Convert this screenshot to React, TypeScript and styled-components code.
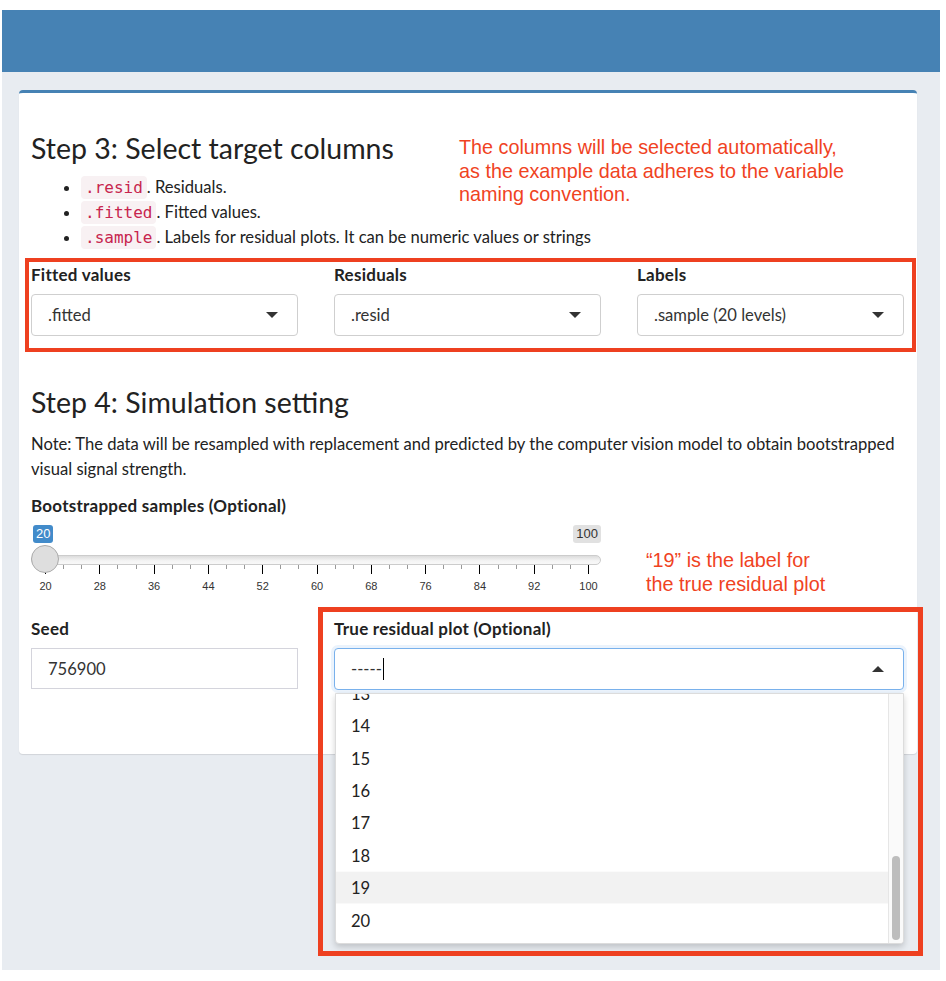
import React from 'react';
import styled, { createGlobalStyle } from 'styled-components';

const GlobalStyle = createGlobalStyle`
  html, body { margin: 0; padding: 0; background: #ffffff; }
  body { font-family: "Lato", "Noto Sans", sans-serif; color: #333; }
  * { box-sizing: border-box; }
`;

const Frame = styled.div`
  position: relative;
  margin: 10px 0 0 2px;
  width: 938px;
  height: 960px;
  background: #e8ecf1;
`;

const TopBar = styled.header`
  height: 62px;
  background: #4682b4;
`;

const Content = styled.main`
  padding: 18px 23px 0 17px;
`;

const Card = styled.section`
  background: #fff;
  border-top: 3px solid #4682b4;
  border-radius: 4px;
  box-shadow: 0 1px 1px rgba(0, 0, 0, 0.1);
  padding: 38px 13px 64px 12px;
`;

const Heading = styled.h3<{ $top?: number }>`
  margin: ${(p) => p.$top || 0}px 0 0;
  font-size: 28.5px;
  font-weight: 400;
  line-height: 34px;
  color: #222;
`;

const BulletList = styled.ul`
  margin: 10px 0 0;
  padding-left: 50px;
  font-size: 16.6px;
  line-height: 25px;
  color: #222;
`;

const Code = styled.code`
  font-family: "DejaVu Sans Mono", monospace;
  font-size: 16px;
  color: #c7254e;
  background: #f8f1f3;
  padding: 2px 4px;
  border-radius: 4px;
`;

const FieldGrid = styled.div<{ $top: number }>`
  display: grid;
  grid-template-columns: repeat(3, 267px);
  column-gap: 36px;
  margin-top: ${(p) => p.$top}px;
`;

const Field = styled.div<{ $span?: number }>`
  grid-column: span ${(p) => p.$span || 1};
  position: relative;
`;

const Label = styled.label`
  display: block;
  font-weight: 700;
  font-size: 17px;
  letter-spacing: 0.25px;
  line-height: 20px;
  margin-bottom: 9px;
  color: #222;
`;

const SelectBox = styled.div<{ $focus?: boolean }>`
  height: 42px;
  display: flex;
  align-items: center;
  justify-content: space-between;
  padding: 0 19px 0 16px;
  border: 1px solid ${(p) => (p.$focus ? '#79b1ec' : '#cfcfcf')};
  border-radius: 4px;
  font-size: 16.6px;
  color: #333;
  background: #fff;
  box-shadow: ${(p) => (p.$focus ? '0 0 0 3px rgba(121,177,236,0.15)' : 'none')};
`;

const Caret = styled.span<{ $up?: boolean }>`
  width: 0;
  height: 0;
  border-left: 6px solid transparent;
  border-right: 6px solid transparent;
  ${(p) => (p.$up ? 'border-bottom: 6px solid #333;' : 'border-top: 6px solid #333;')}
`;

const TextInput = styled.div`
  height: 41px;
  margin-top: 1px;
  display: flex;
  align-items: center;
  padding: 0 16px;
  border: 1px solid #d4d4dc;
  font-size: 16.6px;
  color: #333;
  background: #fff;
`;

const Typed = styled.span`
  display: flex;
  align-items: center;
`;

const Cursor = styled.span`
  display: inline-block;
  width: 1px;
  height: 22px;
  background: #000;
  margin-left: 1px;
`;

const Note = styled.p`
  margin: 13px 0 0;
  font-size: 16.6px;
  line-height: 25px;
  color: #222;
`;

const SliderBlock = styled.div`
  margin-top: 14px;
  width: 570px;
`;

const SliderArea = styled.div`
  position: relative;
  height: 78px;
  margin-top: 9px;
  font-family: "Liberation Sans", Arial, sans-serif;
`;

const ValueTag = styled.span<{ $active?: boolean }>`
  position: absolute;
  top: 0;
  ${(p) => (p.$active ? 'left: 2px;' : 'right: 0;')}
  font-size: 13px;
  line-height: 18px;
  padding: 0 3px;
  border-radius: 3px;
  background: ${(p) => (p.$active ? '#428bca' : '#e1e1e1')};
  color: ${(p) => (p.$active ? '#fff' : '#333')};
`;

const Track = styled.div`
  position: absolute;
  left: 0;
  right: 0;
  top: 30px;
  height: 10px;
  border: 1px solid #cccccc;
  border-radius: 6px;
  background: linear-gradient(to bottom, #dcdcdc 0%, #f4f4f4 60%, #f8f8f8 100%);
`;

const Handle = styled.div`
  position: absolute;
  left: 0;
  top: 20px;
  width: 28px;
  height: 28px;
  border-radius: 50%;
  background: #dedede;
  border: 1px solid #ababab;
`;

const Tick = styled.span<{ $major?: boolean }>`
  position: absolute;
  top: 40px;
  width: 1px;
  height: ${(p) => (p.$major ? 9 : 4)}px;
  background: ${(p) => (p.$major ? '#000' : '#999')};
`;

const TickLabel = styled.span`
  position: absolute;
  top: 54px;
  font-size: 11px;
  line-height: 14px;
  color: #333;
  transform: translateX(-50%);
`;

const Menu = styled.div`
  position: absolute;
  left: 1px;
  right: 0;
  top: 74px;
  height: 251px;
  background: #fff;
  border: 1px solid #dcdcdc;
  border-radius: 0 0 4px 4px;
  box-shadow: 0 3px 6px rgba(0, 0, 0, 0.18);
  overflow: hidden;
  z-index: 5;
`;

const MenuInner = styled.div<{ $offset: number }>`
  transform: translateY(${(p) => -p.$offset}px);
`;

const MenuItem = styled.div<{ $hover?: boolean }>`
  height: 32.4px;
  display: flex;
  align-items: center;
  padding-left: 15px;
  font-size: 16.6px;
  color: #222;
  background: ${(p) => (p.$hover ? '#f2f2f2' : '#fff')};
`;

const ScrollTrack = styled.div`
  position: absolute;
  top: 0;
  right: 0;
  bottom: 0;
  width: 15px;
  background: #fafafa;
  border-left: 1px solid #e6e6e6;
`;

const ScrollThumb = styled.div`
  position: absolute;
  left: 3px;
  width: 8px;
  top: 162px;
  height: 84px;
  border-radius: 4px;
  background: #bdbdbd;
`;

const Annotation = styled.div<{ $left: number; $top: number; $lh: number }>`
  position: absolute;
  left: ${(p) => p.$left}px;
  top: ${(p) => p.$top}px;
  font-family: "Liberation Sans", Arial, sans-serif;
  font-size: 19.8px;
  line-height: ${(p) => p.$lh}px;
  color: #f0431f;
  white-space: nowrap;
`;

const RedBox = styled.div<{ $l: number; $t: number; $w: number; $h: number; $b: number }>`
  position: absolute;
  left: ${(p) => p.$l}px;
  top: ${(p) => p.$t}px;
  width: ${(p) => p.$w}px;
  height: ${(p) => p.$h}px;
  border: ${(p) => p.$b}px solid #ee4020;
  pointer-events: none;
  z-index: 6;
`;

const SLIDER_START = 14;
const SLIDER_END = 557;

function Slider() {
  const majors = [20, 28, 36, 44, 52, 60, 68, 76, 84, 92, 100];
  const span = SLIDER_END - SLIDER_START;
  const pos = (v: number) => SLIDER_START + ((v - 20) / 80) * span;
  const ticks: { x: number; major: boolean }[] = [];
  majors.forEach((m, i) => {
    ticks.push({ x: pos(m), major: true });
    if (i < majors.length - 1) {
      ticks.push({ x: pos(m + 8 / 3), major: false });
      ticks.push({ x: pos(m + 16 / 3), major: false });
    }
  });
  return (
    <SliderArea>
      <ValueTag $active>20</ValueTag>
      <ValueTag>100</ValueTag>
      <Track />
      {ticks.map((t, i) => (
        <Tick key={i} $major={t.major} style={{ left: Math.round(t.x) }} />
      ))}
      {majors.map((m) => (
        <TickLabel key={m} style={{ left: pos(m) + 0.5 }}>
          {m}
        </TickLabel>
      ))}
      <Handle />
    </SliderArea>
  );
}

export default function App() {
  const items = Array.from({ length: 20 }, (_, i) => i + 1);
  return (
    <>
      <GlobalStyle />
      <Frame>
        <TopBar />
        <Content>
          <Card>
            <Heading>Step 3: Select target columns</Heading>
            <BulletList>
              <li>
                <Code>.resid</Code>. Residuals.
              </li>
              <li>
                <Code>.fitted</Code>. Fitted values.
              </li>
              <li>
                <Code>.sample</Code>. Labels for residual plots. It can be numeric values or strings
              </li>
            </BulletList>
            <FieldGrid $top={15}>
              <Field>
                <Label>Fitted values</Label>
                <SelectBox>
                  <span>.fitted</span>
                  <Caret />
                </SelectBox>
              </Field>
              <Field>
                <Label>Residuals</Label>
                <SelectBox>
                  <span>.resid</span>
                  <Caret />
                </SelectBox>
              </Field>
              <Field>
                <Label>Labels</Label>
                <SelectBox>
                  <span>.sample (20 levels)</span>
                  <Caret />
                </SelectBox>
              </Field>
            </FieldGrid>
            <Heading $top={49}>Step 4: Simulation setting</Heading>
            <Note>
              Note: The data will be resampled with replacement and predicted by the computer vision model to obtain
              bootstrapped visual signal strength.
            </Note>
            <SliderBlock>
              <Label>Bootstrapped samples (Optional)</Label>
              <Slider />
            </SliderBlock>
            <FieldGrid $top={16}>
              <Field>
                <Label>Seed</Label>
                <TextInput>756900</TextInput>
              </Field>
              <Field $span={2}>
                <Label>True residual plot (Optional)</Label>
                <SelectBox $focus>
                  <Typed>
                    -----
                    <Cursor />
                  </Typed>
                  <Caret $up />
                </SelectBox>
                <Menu>
                  <MenuInner $offset={12 * 32.4 + 16.5}>
                    {items.map((n) => (
                      <MenuItem key={n} $hover={n === 19}>
                        {n}
                      </MenuItem>
                    ))}
                  </MenuInner>
                  <ScrollTrack>
                    <ScrollThumb />
                  </ScrollTrack>
                </Menu>
              </Field>
            </FieldGrid>
          </Card>
        </Content>
        <Annotation $left={457} $top={126} $lh={23.5}>
          The columns will be selected automatically,
          <br />
          as the example data adheres to the variable
          <br />
          naming convention.
        </Annotation>
        <Annotation $left={644} $top={538} $lh={24}>
          “19” is the label for
          <br />
          the true residual plot
        </Annotation>
        <RedBox $l={23} $t={248} $w={891} $h={94} $b={4} />
        <RedBox $l={316} $t={597} $w={605} $h={349} $b={5} />
      </Frame>
    </>
  );
}
